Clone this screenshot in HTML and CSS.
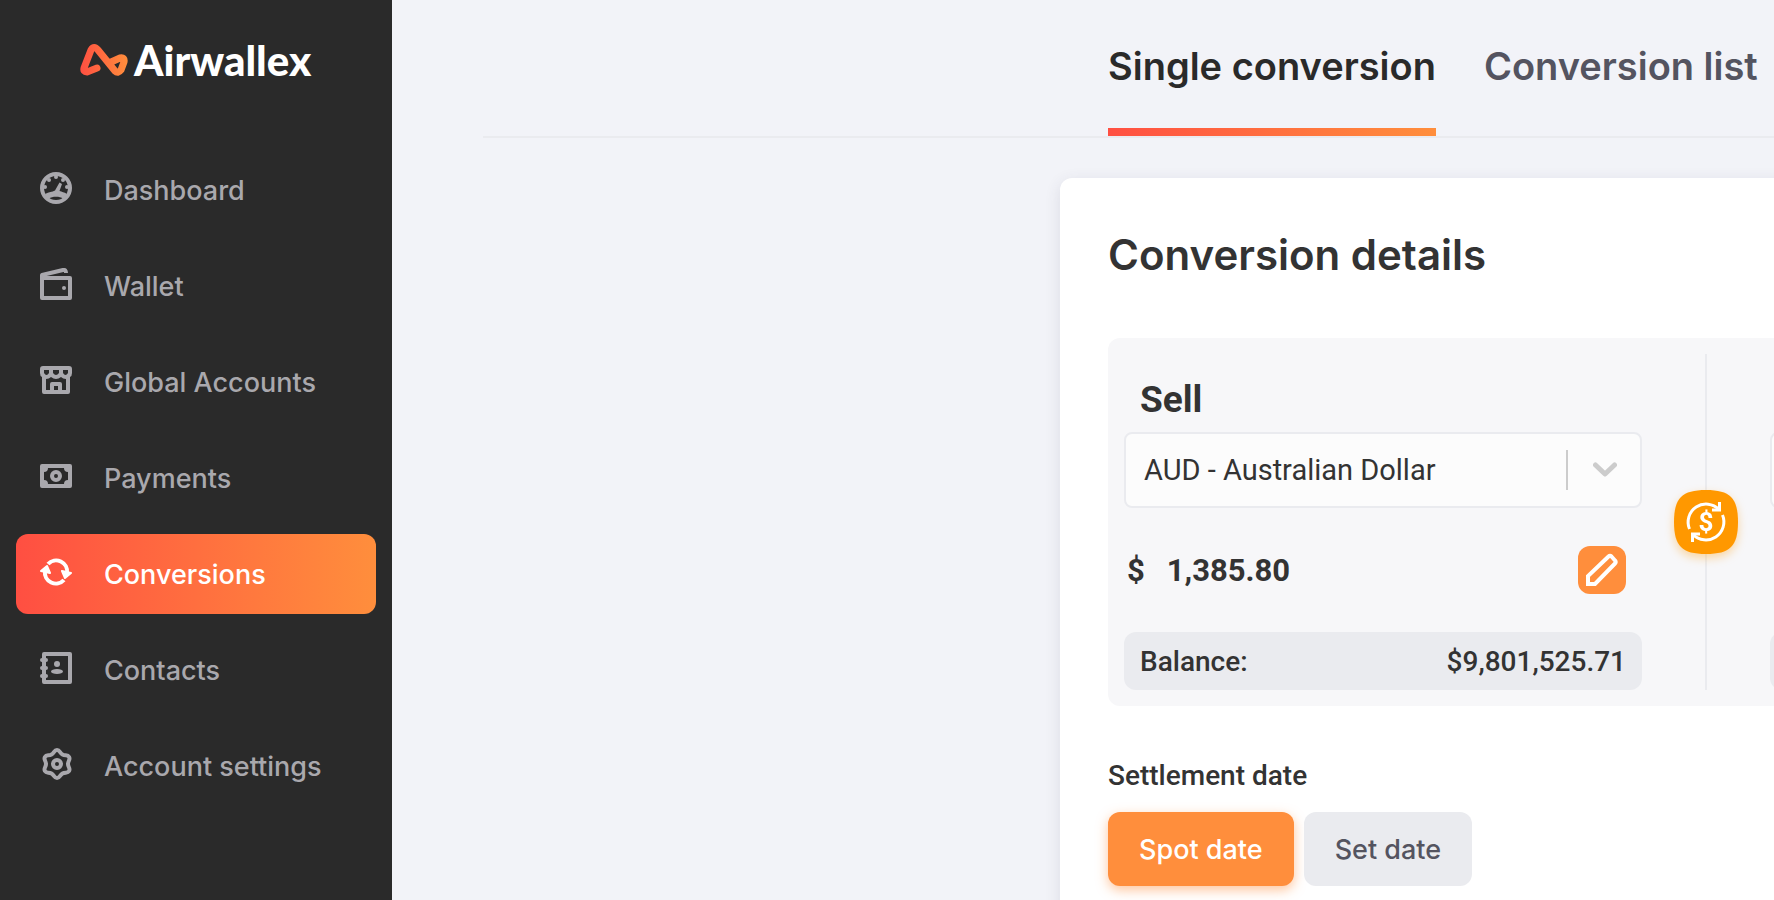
FILE: index.html
```html
<!DOCTYPE html>
<html lang="en">
<head>
    <meta charset="UTF-8">
    <meta name="viewport" content="width=device-width, initial-scale=1.0">
    <title>Conversions - Airwallex</title>
    <link rel="stylesheet" href="styles.css">
</head>
<body>
    <aside class="sidebar">
        <a href="#" class="logo">
            <svg width="48" height="32" viewBox="0 0 48 32" aria-hidden="true">
                <defs>
                    <linearGradient id="brand" gradientUnits="userSpaceOnUse" x1="0" y1="0" x2="48" y2="0">
                        <stop offset="0" stop-color="#ff4f42"/>
                        <stop offset="1" stop-color="#ff8e3c"/>
                    </linearGradient>
                </defs>
                <path d="M17 24L7 28Q3 28 4 24L11 6Q14 1 18 6L35 27Q38 30 41 26L44 18Q45 13 40 14L30 18.500" fill="none" stroke="url(#brand)" stroke-width="7" stroke-linecap="round" stroke-linejoin="round"/>
            </svg>
            <span>Airwallex</span>
        </a>
        <nav class="menu">
            <a href="#" class="menu-item">
                <svg class="icon" viewBox="0 0 32 32">
                    <circle cx="16" cy="16" r="14" fill="none" stroke="currentColor" stroke-width="4"/>
                    <g fill="currentColor">
                        <circle cx="16" cy="5" r="2"/>
                        <circle cx="9" cy="8" r="2"/>
                        <circle cx="23" cy="8" r="2"/>
                        <circle cx="5" cy="15" r="2"/>
                        <circle cx="27" cy="15" r="2"/>
                        <path fill-rule="evenodd" d="M5 22C9 20 12 20 15 18.500L19.500 10.500L22 12L19.500 19C22 20 24 20 27 22L24 28H8ZM9 26.500C12 29 20 29 23 26.500C20 24 12 24 9 26.500Z"/>
                    </g>
                </svg>
                <span>Dashboard</span>
            </a>
            <a href="#" class="menu-item">
                <svg class="icon" viewBox="0 0 32 32" fill="none" stroke="currentColor" stroke-width="4" stroke-linejoin="round">
                    <rect x="2" y="10" width="28" height="20"/>
                    <path d="M2 10V7L23 2Q26 1.500 26 5"/>
                    <circle cx="24" cy="20" r="2" fill="currentColor" stroke="none"/>
                </svg>
                <span>Wallet</span>
            </a>
            <a href="#" class="menu-item">
                <svg class="icon" viewBox="0 0 32 32" fill="currentColor">
                    <path fill-rule="evenodd" d="M3 2H29Q32 2 32 5V9Q32 12 30 13V28Q30 30 28 30H4Q2 30 2 28V13Q0 12 0 9V5Q0 2 3 2ZM4 6V9Q6.500 13 9 9V6ZM13 6V9Q16 13 19 9V6ZM23 6V9Q25.500 13 28 9V6ZM6 15V26H10V20Q10 18 12 18H20Q22 18 22 20V26H26V15Q23 15 21 13Q16 17 11 13Q9 15 6 15ZM14 22V26H18V22Z"/>
                </svg>
                <span>Global Accounts</span>
            </a>
            <a href="#" class="menu-item">
                <svg class="icon" viewBox="0 0 32 32" fill="currentColor">
                    <path fill-rule="evenodd" d="M2 4H30Q32 4 32 6V26Q32 28 30 28H2Q0 28 0 26V6Q0 4 2 4ZM8 8Q8 12 4 12V20Q8 20 8 24H24Q24 20 28 20V12Q24 12 24 8Z"/>
                    <circle cx="16" cy="16" r="4" fill="none" stroke="currentColor" stroke-width="4"/>
                </svg>
                <span>Payments</span>
            </a>
            <a href="#" class="menu-item active" aria-current="page">
                <svg class="icon" viewBox="0 0 32 32" fill="none" stroke="currentColor" stroke-width="4">
                    <path d="M8 8A11 11 0 0 1 27 17M24 24A11 11 0 0 1 5 15"/>
                    <path d="M1 15L7 10L10 17ZM31 17L25 22L22 15Z" fill="currentColor" stroke-width="2" stroke-linejoin="round"/>
                </svg>
                <span>Conversions</span>
            </a>
            <a href="#" class="menu-item">
                <svg class="icon" viewBox="0 0 32 32" fill="currentColor">
                    <rect x="4" y="2" width="26" height="28" fill="none" stroke="currentColor" stroke-width="4" stroke-linejoin="round"/>
                    <path d="M2 8H6M2 16H6M2 24H6" stroke="currentColor" stroke-width="4" stroke-linecap="round"/>
                    <circle cx="17" cy="12" r="3"/>
                    <ellipse cx="17" cy="19.500" rx="6" ry="2.500"/>
                </svg>
                <span>Contacts</span>
            </a>
            <a href="#" class="menu-item">
                <svg class="icon" viewBox="0 0 32 32" fill="none" stroke="currentColor" stroke-width="4">
                    <path d="M22.500 6.500C25.300 8.100 27.600 6.400 29.100 9S28 12.800 28 16S30.600 20.400 29.100 23S25.300 23.900 22.500 25.500S20 30 17 30S14.300 27.100 11.500 25.500S6.400 25.600 4.900 23S6 19.200 6 16S3.400 11.600 4.900 9S8.700 8.100 11.500 6.500S14 2 17 2S19.700 4.900 22.500 6.500Z"/>
                    <circle cx="17" cy="16" r="4"/>
                </svg>
                <span>Account settings</span>
            </a>
        </nav>
    </aside>

    <main class="main">
        <nav class="tabs">
            <a href="#" class="tab selected">Single conversion</a>
            <a href="#" class="tab">Conversion list</a>
        </nav>

        <section class="card">
            <h1>Conversion details</h1>

            <div class="panel">
                <div class="side">
                    <label class="side-title" for="sell">Sell</label>
                    <div class="select">
                        <select id="sell">
                            <option>AUD - Australian Dollar</option>
                        </select>
                        <span class="select-arrow">
                            <svg width="24" height="16" viewBox="0 0 24 16" aria-hidden="true">
                                <path d="M2.500 3L12 12L21.500 3" fill="none" stroke="currentColor" stroke-width="5" stroke-linecap="round" stroke-linejoin="round"/>
                            </svg>
                        </span>
                    </div>
                    <div class="amount">
                        <span>$</span>
                        <span>1,385.80</span>
                        <button type="button" class="edit" aria-label="Edit amount">
                            <svg width="48" height="48" viewBox="0 0 48 48">
                                <path d="M10 38V30L30.500 10.500Q32 9 33.500 10.500L37 14.500Q38.500 16 37 17.500L17 38Z" fill="none" stroke="currentColor" stroke-width="4"/>
                            </svg>
                        </button>
                    </div>
                    <div class="balance">
                        <span>Balance:</span>
                        <span>$9,801,525.71</span>
                    </div>
                </div>

                <div class="divider">
                    <button type="button" class="swap" aria-label="Swap currencies">
                        <svg width="64" height="64" viewBox="0 0 64 64">
                            <path d="M32 0C56 0 64 8 64 32S56 64 32 64S0 56 0 32S8 0 32 0Z" fill="#ff9800"/>
                            <g fill="none" stroke="#fff" stroke-width="3">
                                <path d="M15.500 39A18 18 0 0 1 45 19.500"/>
                                <path d="M48.500 25A18 18 0 0 1 19 44.500"/>
                                <path d="M45.500 12V20H38M18.500 52V44H26"/>
                            </g>
                            <text x="32" y="41" class="swap-sign">$</text>
                        </svg>
                    </button>
                </div>

                <div class="side">
                    <div class="side-title"></div>
                    <div class="select">
                        <select aria-label="Buy currency"></select>
                    </div>
                    <div class="amount"></div>
                    <div class="balance"></div>
                </div>
            </div>

            <h2>Settlement date</h2>
            <div class="dates">
                <button type="button" class="date-btn chosen">Spot date</button>
                <button type="button" class="date-btn">Set date</button>
            </div>
        </section>
    </main>
</body>
</html>
```
FILE: styles.css
```css
* {
    box-sizing: border-box;
}
body {
    margin: 0;
    display: flex;
    height: 100vh;
    overflow: hidden;
    font-family: Inter, "Liberation Sans", sans-serif;
    background-color: #f2f3f8;
    color: #333;
}
a {
    text-decoration: none;
    color: inherit;
}
button, select {
    font: inherit;
    border: none;
    cursor: pointer;
}

/* sidebar */
.sidebar {
    flex: 0 0 392px;
    padding: 32px 16px;
    background-color: #2a2a2a;
}
.logo {
    display: flex;
    align-items: center;
    gap: 6px;
    height: 56px;
    margin-bottom: 62px;
    padding-left: 64px;
    color: white;
    font-family: Lato, sans-serif;
    font-size: 42px;
    font-weight: 900;
}
.menu {
    display: flex;
    flex-direction: column;
    gap: 16px;
}
.menu-item {
    display: flex;
    align-items: center;
    gap: 32px;
    height: 80px;
    padding: 0 24px;
    border-radius: 12px;
    color: #a9a8ad;
    font-size: 27px;
    font-weight: 500;
}
.menu-item.active {
    background: linear-gradient(90deg, #ff4f42, #ff8e3c);
    color: white;
}
.icon {
    width: 32px;
    height: 32px;
    margin-bottom: 4px;
}

/* content */
.main {
    flex: 1;
    min-width: 0;
    padding-left: 91px;
    overflow: hidden;
}
.tabs {
    display: flex;
    gap: 48px;
    height: 138px;
    padding-left: 625px;
    border-bottom: 2px solid #eaebef;
}
.tab {
    padding-top: 42px;
    border-bottom: 8px solid transparent;
    color: #545460;
    font-size: 38px;
    line-height: 48px;
    font-weight: 600;
    white-space: nowrap;
}
.tab.selected {
    border-image: linear-gradient(90deg, #ff4f42, #ff8e3c) 1;
    color: #2a2a2a;
}
.card {
    min-width: 1292px;
    margin: 40px 0 0 577px;
    padding: 48px;
    border-radius: 12px;
    background-color: white;
    box-shadow: 0 4px 16px rgba(60,60,90,0.12);
}
h1 {
    margin: 0 0 54px;
    font-size: 42px;
    line-height: 58px;
    font-weight: 600;
}
.panel {
    display: grid;
    grid-template-columns: minmax(518px, 1fr) 128px minmax(518px, 1fr);
    padding: 16px;
    border-radius: 12px;
    background-color: #f7f7f9;
    font-family: Roboto, sans-serif;
}
.side-title {
    display: block;
    height: 78px;
    padding: 26px 16px 0;
    font-size: 37px;
    line-height: 40px;
    font-weight: 700;
}
.select {
    position: relative;
}
.select select {
    appearance: none;
    display: block;
    width: 100%;
    height: 76px;
    padding: 0 80px 0 18px;
    border: 2px solid #eaebef;
    border-radius: 8px;
    background-color: #fcfcfc;
    color: #333;
    font-size: 29px;
    font-weight: 400;
}
.select-arrow {
    position: absolute;
    top: 18px;
    right: 0;
    display: flex;
    align-items: center;
    justify-content: center;
    width: 76px;
    height: 40px;
    border-left: 2px solid #ccc;
    color: #ccc;
    pointer-events: none;
}
.amount {
    display: flex;
    align-items: center;
    gap: 22px;
    height: 124px;
    padding: 0 16px 0 3px;
    font-size: 31px;
    font-weight: 700;
}
.edit {
    width: 48px;
    height: 48px;
    margin-left: auto;
    padding: 0;
    border-radius: 12px;
    background-color: #ff8e3c;
    color: white;
}
.balance {
    display: flex;
    align-items: center;
    justify-content: space-between;
    height: 58px;
    padding: 0 16px;
    border-radius: 12px;
    background-color: #eaebef;
    font-size: 28px;
    font-weight: 500;
}
.divider {
    display: flex;
    align-items: center;
    justify-content: center;
    background: linear-gradient(#eaebef, #eaebef) center / 2px 100% no-repeat;
}
.swap {
    width: 64px;
    height: 64px;
    padding: 0;
    background: none;
    filter: drop-shadow(0 4px 5px rgba(255,152,0,0.35));
}
.swap svg, .edit svg {
    display: block;
}
.swap-sign {
    fill: white;
    font-family: Roboto, sans-serif;
    font-size: 26px;
    font-weight: 700;
    text-anchor: middle;
}
h2 {
    margin: 50px 0 16px;
    font-family: Roboto, sans-serif;
    font-size: 28px;
    line-height: 40px;
    font-weight: 500;
}
.dates {
    display: flex;
    gap: 10px;
}
.date-btn {
    height: 74px;
    padding: 0 31px;
    border-radius: 12px;
    background-color: #eaebef;
    color: #545460;
    font-size: 27px;
    font-weight: 500;
}
.date-btn.chosen {
    background-color: #ff8e3c;
    color: white;
    box-shadow: 0 4px 12px rgba(255,142,60,0.5);
}
```
